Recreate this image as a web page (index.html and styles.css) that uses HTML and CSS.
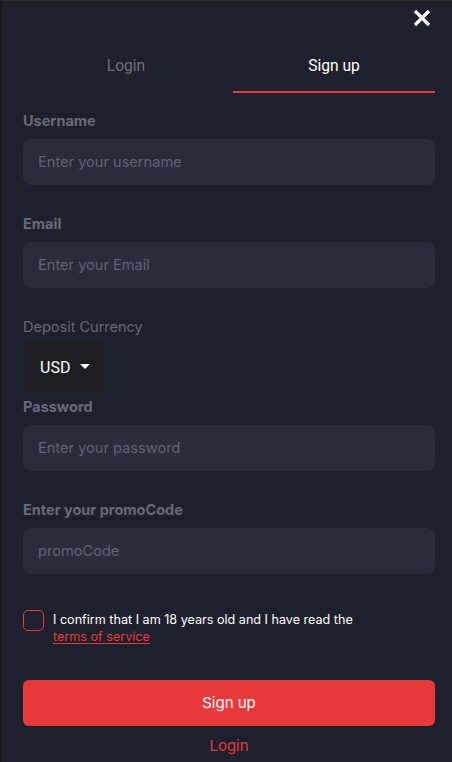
FILE: index.html
```html
<!DOCTYPE html>
<html>
<head>
<meta charset="utf-8">
<link rel="stylesheet" href="styles.css">
</head>
<body>
<div class="panel">
  <div class="topbar">
    <button class="close" aria-label="Close">
      <svg width="18" height="18" viewBox="0 0 18 18"><path d="M2 2 L16 16 M16 2 L2 16" stroke="#fff" stroke-width="3.2" stroke-linecap="butt"/></svg>
    </button>
  </div>
  <div class="tabs">
    <div class="tab">Login</div>
    <div class="tab active">Sign up</div>
  </div>
  <form class="form">
    <div class="field">
      <label class="label">Username</label>
      <div class="input">Enter your username</div>
    </div>
    <div class="field">
      <label class="label">Email</label>
      <div class="input">Enter your Email</div>
    </div>
    <div class="currency">
      <div class="label light">Deposit Currency</div>
      <div class="select">USD <span class="caret"></span></div>
    </div>
    <div class="field tight">
      <label class="label">Password</label>
      <div class="input">Enter your password</div>
    </div>
    <div class="field">
      <label class="label">Enter your promoCode</label>
      <div class="input">promoCode</div>
    </div>
    <div class="confirm">
      <span class="check"></span>
      <div class="confirm-text">I confirm that I am 18 years old and I have read the<br><a class="terms">terms of service</a></div>
    </div>
    <div class="submit">Sign up</div>
    <div class="login-link">Login</div>
  </form>
</div>
</body>
</html>
```
FILE: styles.css
```css
* { box-sizing: border-box; }
html, body { margin: 0; padding: 0; }
body {
  width: 452px;
  height: 762px;
  background: #1e202d;
  font-family: Inter, "Noto Sans", sans-serif;
  overflow: hidden;
}
.panel {
  height: 762px;
  border-top: 1px solid #2d2d30;
  border-left: 2px solid #17171b;
  padding: 0 17px 0 21px;
}
.topbar {
  display: flex;
  justify-content: flex-end;
  height: 32px;
  padding-top: 8px;
  margin-right: 4px;
}
.close {
  background: none;
  border: 0;
  padding: 0;
  width: 18px;
  height: 18px;
  cursor: pointer;
}
.close svg { display: block; }
.tabs {
  display: grid;
  grid-template-columns: 206px 202px;
  gap: 4px;
}
.tab {
  text-align: center;
  font-family: Roboto, sans-serif;
  font-size: 15.6px;
  color: #6c7080;
  height: 60px;
  padding-top: 23px;
  line-height: 20px;
  border-bottom: 2px solid transparent;
}
.tab.active {
  color: #ffffff;
  border-bottom-color: #e8393b;
}
.form {
  display: flex;
  flex-direction: column;
  padding-top: 19px;
}
.field {
  display: flex;
  flex-direction: column;
  margin-bottom: 30px;
}
.label {
  font-size: 14.5px;
  font-weight: 700;
  color: #666b7c;
  line-height: 18px;
  margin-bottom: 9px;
}
.label.light {
  font-weight: 400;
  margin-bottom: 5px;
}
.input {
  height: 46px;
  border-radius: 8px;
  background: #2a2c3d;
  color: #5f6479;
  font-size: 14.6px;
  line-height: 46px;
  padding-left: 15px;
}
.currency {
  display: flex;
  flex-direction: column;
}
.select {
  width: 82px;
  height: 52px;
  border-radius: 7px;
  background: #1e1e22;
  color: #fff;
  font-family: Roboto, sans-serif;
  font-size: 16px;
  display: flex;
  align-items: center;
  padding-left: 17px;
  gap: 10px;
}
.caret {
  width: 0;
  height: 0;
  border-left: 5px solid transparent;
  border-right: 5px solid transparent;
  border-top: 5px solid #fff;
  margin-top: -2px;
}
.field.tight .label { margin-top: 5px; }
.confirm {
  display: flex;
  gap: 9px;
  margin-top: 6px;
}
.check {
  width: 21px;
  height: 21px;
  border: 1px solid #e8393b;
  border-radius: 5px;
  flex: none;
}
.confirm-text {
  color: #fff;
  font-size: 12.6px;
  line-height: 17px;
  padding-top: 1px;
}
.terms {
  color: #e8393b;
  text-decoration: underline;
  text-underline-offset: 2px;
}
.submit {
  margin-top: 35px;
  height: 46px;
  border-radius: 6px;
  background: #e8393b;
  color: #fff;
  font-size: 15px;
  line-height: 46px;
  text-align: center;
}
.login-link {
  text-align: center;
  color: #e8393b;
  font-size: 15px;
  margin-top: 11px;
  line-height: 18px;
}
```
